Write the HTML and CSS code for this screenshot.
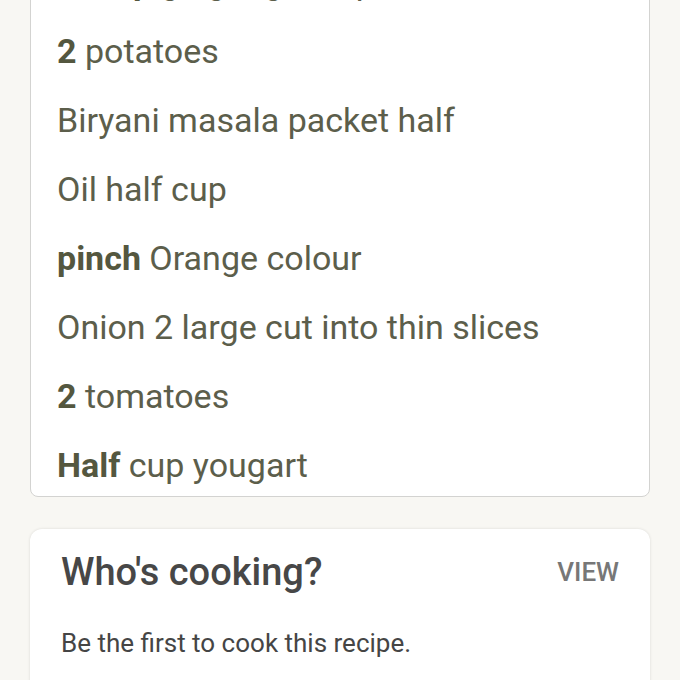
FILE: index.html
```html
<!DOCTYPE html>
<html>
<head>
<meta charset="utf-8">
<link rel="stylesheet" href="styles.css">
</head>
<body>
<div class="page">
  <div class="card ingredients">
    <ul class="list">
      <li class="item"><b>1 tbsp</b> ginger garlic paste</li>
      <li class="item"><b>2</b> potatoes</li>
      <li class="item">Biryani masala packet half</li>
      <li class="item">Oil half cup</li>
      <li class="item"><b>pinch</b> Orange colour</li>
      <li class="item">Onion 2 large cut into thin slices</li>
      <li class="item"><b>2</b> tomatoes</li>
      <li class="item"><b>Half</b> cup yougart</li>
    </ul>
  </div>
  <div class="card cooking">
    <div class="cook-head">
      <h2 class="cook-title">Who's cooking?</h2>
      <span class="view">VIEW</span>
    </div>
    <p class="cook-text">Be the first to cook this recipe.</p>
  </div>
</div>
</body>
</html>
```

FILE: styles.css
```css
html, body {
  margin: 0;
  padding: 0;
  background: #f8f7f3;
  font-family: Roboto, "Noto Sans", sans-serif;
}
.page {
  height: 680px;
  overflow: hidden;
}
.card {
  margin: 0 30px;
  background: #ffffff;
}
.ingredients {
  margin-top: -63px;
  padding-top: 10px;
  border: 1px solid #d3d3d1;
  border-radius: 8px;
  box-sizing: border-box;
}
.list {
  list-style: none;
  margin: 0;
  padding: 0 26px;
}
.item {
  font-size: 34px;
  line-height: 40px;
  padding: 14px 0 15px;
  color: #5c5e4b;
}
.item:last-child {
  padding-bottom: 11px;
}
.item b {
  font-weight: 700;
  color: #54573f;
}
.cooking {
  margin-top: 32px;
  border-radius: 12px;
  box-shadow: 0 0 3px rgba(0,0,0,0.12);
  padding: 20px 31px 40px;
}
.cook-head {
  display: flex;
  justify-content: space-between;
  align-items: center;
}
.cook-title {
  margin: 0;
  font-size: 38px;
  line-height: 46px;
  font-weight: 500;
  color: #474747;
}
.view {
  font-size: 26px;
  font-weight: 500;
  color: #777777;
}
.cook-text {
  margin: 33px 0 0;
  font-size: 26px;
  line-height: 30px;
  color: #454545;
}
```
